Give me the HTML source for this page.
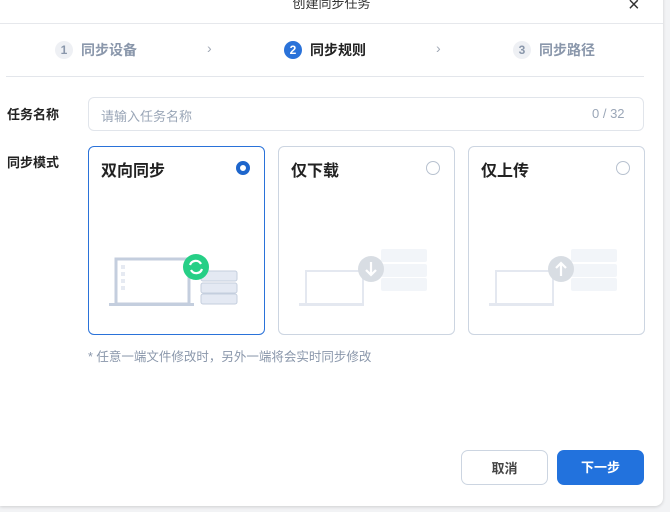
<!DOCTYPE html><html><head><meta charset="utf-8"><style>
body{margin:0;width:670px;height:512px;background:#f2f3f5;font-family:"Liberation Sans","Noto Sans CJK SC",sans-serif;position:relative;overflow:hidden}
.d{position:absolute;left:0;top:-10px;width:663px;height:516px;background:#fff;border-radius:0 0 8px 0;box-shadow:0 1px 3px rgba(0,0,0,.15)}
.a{position:absolute}
.t{font-size:13px;color:#333;left:0;width:663px;text-align:center;top:-7px}
.step{font-size:14px;font-weight:bold;top:40px;color:#8a97ab;display:flex;align-items:center}
.n{width:18px;height:18px;border-radius:50%;background:#eef0f4;color:#8a97ab;font-size:12px;font-weight:bold;text-align:center;line-height:18px;margin-right:8px}
.card{top:146px;width:175px;height:187px;border:1px solid #ccd5e1;border-radius:6px;box-sizing:content-box}
.card .h{position:absolute;left:12px;top:10px;font-size:16px;font-weight:bold;color:#222}
.r{position:absolute;right:14px;top:14px;width:14px;height:14px;border-radius:50%;border:1px solid #b7c1cf;box-sizing:border-box}
.btn{top:450px;width:87px;height:35px;border-radius:7px;font-size:13px;font-weight:bold;text-align:center;line-height:35px;box-sizing:border-box}
</style></head><body>
<div class="d"></div>
<div class="a t">创建同步任务</div>
<div class="a" style="left:628px;top:-6px;font-size:20px;color:#333">×</div>
<div class="a" style="left:0;top:23px;width:663px;height:1px;background:#e6e8ec"></div>
<div class="a step" style="left:55px"><span class="n">1</span>同步设备</div>
<div class="a" style="left:207px;top:40px;color:#a0a8b5;font-size:14px">›</div>
<div class="a step" style="left:284px;color:#222"><span class="n" style="background:#2a72d9;color:#fff">2</span>同步规则</div>
<div class="a" style="left:436px;top:40px;color:#a0a8b5;font-size:14px">›</div>
<div class="a step" style="left:513px"><span class="n">3</span>同步路径</div>
<div class="a" style="left:6px;top:76px;width:638px;height:1px;background:#e3e6eb"></div>
<div class="a" style="left:7px;top:104px;font-size:13px;font-weight:bold;color:#222">任务名称</div>
<div class="a" style="left:88px;top:97px;width:556px;height:34px;border:1px solid #e1e5eb;border-radius:6px;box-sizing:border-box"></div>
<div class="a" style="left:101px;top:106px;font-size:13px;color:#9aa6b7">请输入任务名称</div>
<div class="a" style="left:592px;top:106px;font-size:13px;color:#9aa6b7">0 / 32</div>
<div class="a" style="left:7px;top:152px;font-size:13px;font-weight:bold;color:#222">同步模式</div>
<div class="a card" style="left:88px;border-color:#2a72d9"><div class="h">双向同步</div><div class="r" style="border:4px solid #1e66cc"></div>
<svg class="a" style="left:20px;top:100px" width="130" height="60"><rect x="7" y="12" width="73" height="45" fill="#fff" stroke="#c4cede" stroke-width="3"/><rect x="0" y="56" width="85" height="3" fill="#c4cede"/><g fill="#e6eaf2"><rect x="12" y="18" width="4" height="4"/><rect x="12" y="25" width="4" height="4"/><rect x="12" y="32" width="4" height="4"/><rect x="12" y="39" width="4" height="4"/></g><g fill="#e4e9f3" stroke="#c4cede"><rect x="92" y="24" width="36" height="10" rx="2"/><rect x="92" y="36" width="36" height="10" rx="2"/><rect x="92" y="47" width="36" height="10" rx="2"/></g><circle cx="87" cy="20" r="13" fill="#26cf86"/><path d="M81 18a6 6 0 0 1 11-1M93 22a6 6 0 0 1-11 1" stroke="#fff" stroke-width="2.2" fill="none"/></svg></div>
<div class="a card" style="left:278px"><div class="h">仅下载</div><div class="r"></div>
<svg class="a" style="left:20px;top:100px" width="130" height="60" opacity=".45"><rect x="7" y="24" width="57" height="33" fill="#fff" stroke="#c4cede" stroke-width="2"/><rect x="0" y="56" width="65" height="3" fill="#c4cede"/><g fill="#e4e9f3"><rect x="82" y="2" width="46" height="13" rx="2"/><rect x="82" y="17" width="46" height="13" rx="2"/><rect x="82" y="31" width="46" height="13" rx="2"/></g><circle cx="72" cy="22" r="13" fill="#aab4c3"/><path d="M72 15v13M67 23l5 5 5-5" stroke="#fff" stroke-width="2.2" fill="none"/></svg></div>
<div class="a card" style="left:468px"><div class="h">仅上传</div><div class="r"></div>
<svg class="a" style="left:20px;top:100px" width="130" height="60" opacity=".45"><rect x="7" y="24" width="57" height="33" fill="#fff" stroke="#c4cede" stroke-width="2"/><rect x="0" y="56" width="65" height="3" fill="#c4cede"/><g fill="#e4e9f3"><rect x="82" y="2" width="46" height="13" rx="2"/><rect x="82" y="17" width="46" height="13" rx="2"/><rect x="82" y="31" width="46" height="13" rx="2"/></g><circle cx="72" cy="22" r="13" fill="#aab4c3"/><path d="M72 29v-13M67 21l5-5 5 5" stroke="#fff" stroke-width="2.2" fill="none"/></svg></div>
<div class="a" style="left:88px;top:346px;font-size:12.5px;color:#8a97ab">* 任意一端文件修改时，另外一端将会实时同步修改</div>
<div class="a btn" style="left:461px;border:1px solid #ccd5e1;color:#444">取消</div>
<div class="a btn" style="left:557px;background:#2272dd;color:#fff">下一步</div>
</body></html>
